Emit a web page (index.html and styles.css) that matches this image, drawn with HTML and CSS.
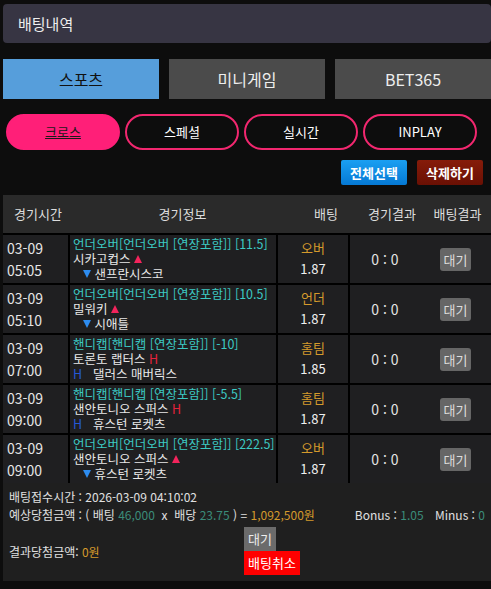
FILE: index.html
```html
<!DOCTYPE html>
<html lang="ko">

<head>
  <meta charset="UTF-8">
  <meta name="viewport" content="width=device-width, initial-scale=1.0">
  <title>배팅내역</title>
  <link rel="stylesheet" href="styles.css">
</head>

<body>
  <div class="page">
    <div class="title-bar">배팅내역</div>

    <!-- 게임 종류 탭 -->
    <div class="tabs">
      <a href="#" class="tab active">스포츠</a>
      <a href="#" class="tab">미니게임</a>
      <a href="#" class="tab">BET365</a>
    </div>

    <!-- 배팅 타입 -->
    <div class="pills">
      <a href="#" class="pill active">크로스</a>
      <a href="#" class="pill">스페셜</a>
      <a href="#" class="pill">실시간</a>
      <a href="#" class="pill">INPLAY</a>
    </div>

    <div class="actions">
      <a href="#" class="btn btn-blue">전체선택</a>
      <a href="#" class="btn btn-red">삭제하기</a>
    </div>

    <div class="bet-table">
      <div class="thead">
        <div>경기시간</div>
        <div>경기정보</div>
        <div>배팅</div>
        <div>경기결과</div>
        <div>배팅결과</div>
      </div>

      <div class="tbody">
        <div class="row">
          <div class="cell time">03-09<br>05:05</div>
          <div class="cell info">
            <div class="market">언더오버[언더오버 [연장포함]] [11.5]</div>
            <div>시카고컵스 <i class="up"></i></div>
            <div class="away"><i class="down"></i> 샌프란시스코</div>
          </div>
          <div class="cell pick"><span class="pick-name">오버</span><br>1.87</div>
          <div class="cell result">
            <span class="score">0 : 0</span>
            <span class="state"><b>대기</b></span>
          </div>
        </div>

        <div class="row">
          <div class="cell time">03-09<br>05:10</div>
          <div class="cell info">
            <div class="market">언더오버[언더오버 [연장포함]] [10.5]</div>
            <div>밀워키 <i class="up"></i></div>
            <div class="away"><i class="down"></i> 시애틀</div>
          </div>
          <div class="cell pick"><span class="pick-name">언더</span><br>1.87</div>
          <div class="cell result">
            <span class="score">0 : 0</span>
            <span class="state"><b>대기</b></span>
          </div>
        </div>

        <div class="row">
          <div class="cell time">03-09<br>07:00</div>
          <div class="cell info">
            <div class="market">핸디캡[핸디캡 [연장포함]] [-10]</div>
            <div>토론토 랩터스 <span class="h-red">H</span></div>
            <div><span class="h-blue">H</span>댈러스 매버릭스</div>
          </div>
          <div class="cell pick"><span class="pick-name">홈팀</span><br>1.85</div>
          <div class="cell result">
            <span class="score">0 : 0</span>
            <span class="state"><b>대기</b></span>
          </div>
        </div>

        <div class="row">
          <div class="cell time">03-09<br>09:00</div>
          <div class="cell info">
            <div class="market">핸디캡[핸디캡 [연장포함]] [-5.5]</div>
            <div>샌안토니오 스퍼스 <span class="h-red">H</span></div>
            <div><span class="h-blue">H</span>휴스턴 로켓츠</div>
          </div>
          <div class="cell pick"><span class="pick-name">홈팀</span><br>1.87</div>
          <div class="cell result">
            <span class="score">0 : 0</span>
            <span class="state"><b>대기</b></span>
          </div>
        </div>

        <div class="row">
          <div class="cell time">03-09<br>09:00</div>
          <div class="cell info">
            <div class="market">언더오버[언더오버 [연장포함]] [222.5]</div>
            <div>샌안토니오 스퍼스 <i class="up"></i></div>
            <div class="away"><i class="down"></i> 휴스턴 로켓츠</div>
          </div>
          <div class="cell pick"><span class="pick-name">오버</span><br>1.87</div>
          <div class="cell result">
            <span class="score">0 : 0</span>
            <span class="state"><b>대기</b></span>
          </div>
        </div>
      </div>
    </div>

    <!-- 배팅 요약 -->
    <div class="summary">
      <div class="line">배팅접수시간 : 2026-03-09 04:10:02</div>
      <div class="line line-split">
        <span>예상당첨금액 : ( 배팅 <em class="teal">46,000</em> &nbsp;x &nbsp;배당 <em class="teal">23.75</em> ) = <em class="gold">1,092,500원</em></span>
        <span class="extra">Bonus : <em class="teal">1.05</em> <span class="minus">Minus : <em class="teal">0</em></span></span>
      </div>
      <div class="bottom">
        <div class="half"><span>결과당첨금액: <em class="gold">0원</em></span></div>
        <div class="half">
          <div class="stack">
            <span class="tag-gray">대기</span>
            <a href="#" class="tag-red">배팅취소</a>
          </div>
        </div>
      </div>
    </div>
  </div>
</body>

</html>
```

FILE: styles.css
```css
* {
  margin: 0;
  padding: 0;
  box-sizing: border-box;
}

a {
  text-decoration: none;
}

em,
i {
  font-style: normal;
}

body {
  background-color: #0d0d0d;
  color: #e2e2e2;
  font-family: "Noto Sans CJK KR", "Liberation Sans", sans-serif;
  font-size: 13px;
}

.page {
  width: 488px;
  margin-left: 3px;
  padding-top: 4px;
}

.title-bar {
  height: 39px;
  line-height: 39px;
  padding-left: 15px;
  background-color: #373543;
  border-radius: 4px;
  font-size: 15px;
  color: #eee;
}

.tabs {
  display: flex;
  gap: 10px;
  margin-top: 16px;
}

.tabs .tab {
  flex: 1;
  height: 40px;
  line-height: 40px;
  text-align: center;
  background-color: #4b4b4b;
  color: #eee;
  font-size: 16px;
}

.tabs .active {
  background-color: #569edb;
  color: #111;
}

.pills {
  display: flex;
  gap: 5px;
  margin-top: 15px;
  padding-left: 3px;
}

.pills .pill {
  width: 114px;
  height: 36px;
  line-height: 32px;
  text-align: center;
  border: 2px solid #f2276f;
  border-radius: 18px;
  color: #fff;
  font-size: 13px;
}

.pills .active {
  background-color: #ff1f78;
  border-color: #ff1f78;
  color: #1a1a1a;
  text-decoration: underline;
}

.actions {
  display: flex;
  justify-content: flex-end;
  gap: 10px;
  margin-top: 10px;
  padding-right: 8px;
}

.btn {
  width: 66px;
  height: 25px;
  line-height: 25px;
  text-align: center;
  border-radius: 2px;
  color: #fff;
  font-weight: bold;
  font-size: 13px;
}

.btn-blue {
  background: linear-gradient(#1a9ff2, #0579d4);
}

.btn-red {
  background: linear-gradient(#861c0a, #6a1004);
}

.bet-table {
  margin-top: 10px;
  background-color: #000;
}

.thead {
  display: grid;
  grid-template-columns: 70px 219px 68px 64px 67px;
  height: 38px;
  line-height: 38px;
  background-color: #2a2a2a;
  text-align: center;
  font-size: 13px;
  color: #ddd;
}

.tbody {
  display: flex;
  flex-direction: column;
  gap: 2px;
  padding-top: 2px;
}

.row {
  display: grid;
  grid-template-columns: 65px 206px 70px 1fr;
  column-gap: 2px;
  height: 48px;
}

.cell {
  background-color: #1f1f21;
}

.time {
  padding: 2px 0 0 4px;
  line-height: 22px;
  font-size: 14px;
  color: #e6e6e6;
}

.info {
  padding: 1px 0 0 3px;
  line-height: 15px;
  font-size: 12.5px;
  color: #e8e8e8;
  white-space: nowrap;
}

.info .market {
  color: #3ccac4;
}

.info .away {
  padding-left: 10px;
}

.up,
.down {
  display: inline-block;
  width: 0;
  height: 0;
  border-left: 4.5px solid transparent;
  border-right: 4.5px solid transparent;
  vertical-align: 1px;
}

.up {
  border-bottom: 8px solid #f3245c;
}

.down {
  border-top: 8px solid #2d8cf0;
}

.h-red {
  color: #e3223c;
}

.h-blue {
  display: inline-block;
  width: 20px;
  color: #2458d4;
}

.pick {
  padding-top: 2px;
  line-height: 21px;
  text-align: center;
  font-size: 13px;
  color: #f0f0f0;
}

.pick .pick-name {
  color: #d49a2c;
}

.result {
  display: grid;
  grid-template-columns: 70px 1fr;
  align-items: center;
  text-align: center;
}

.result .score {
  font-size: 14px;
  color: #e4e4e4;
}

.result .state b {
  display: inline-block;
  width: 31px;
  height: 23px;
  line-height: 23px;
  background-color: #666;
  border-radius: 3px;
  font-weight: normal;
  font-size: 13px;
  color: #ddd;
}

.summary {
  background-color: #1f1f1f;
  padding: 5px 6px 6px 6px;
  font-size: 12px;
  color: #e0e0e0;
}

.summary .line {
  height: 18px;
  line-height: 18px;
}

.summary .line-split {
  display: flex;
  justify-content: space-between;
}

.summary .minus {
  margin-left: 8px;
}

.teal {
  color: #3b8c7a;
}

.gold {
  color: #d49a2c;
}

.summary .bottom {
  display: flex;
  margin-top: 3px;
  margin-left: -6px;
}

.summary .half {
  width: 50%;
  display: flex;
  align-items: center;
}

.summary .half:first-child {
  padding-left: 6px;
}

.summary .stack {
  display: flex;
  flex-direction: column;
  align-items: flex-start;
}

.tag-gray {
  height: 24px;
  line-height: 24px;
  padding: 0 4px;
  background-color: #6b6b6b;
  font-size: 13px;
  color: #eee;
}

.tag-red {
  height: 24px;
  line-height: 24px;
  padding: 0 4px;
  background-color: #ff0000;
  font-size: 13px;
  color: #fff;
}
```
